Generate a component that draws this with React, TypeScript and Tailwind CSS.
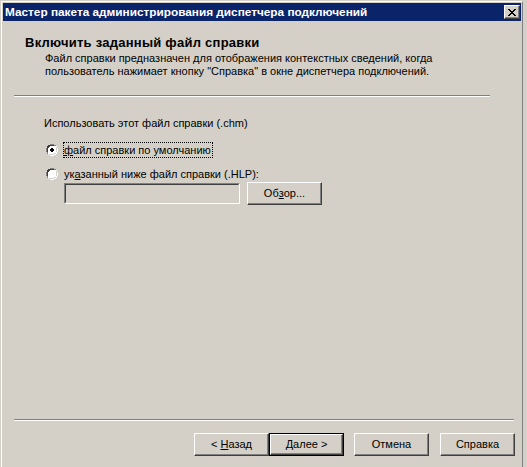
import React from "react";

const raised =
  "border border-t-white border-l-white border-r-[#404040] border-b-[#404040] shadow-[inset_-1px_-1px_0_#808080]";

function Btn({ children, def = false, w = "w-[75px]" }: { children: React.ReactNode; def?: boolean; w?: string }) {
  if (def) {
    return (
      <div className={`${w} h-[23px] border border-black`}>
        <div className={`w-full h-full ${raised} flex items-center justify-center text-[11px] text-black`}>{children}</div>
      </div>
    );
  }
  return (
    <div className={`${w} h-[23px] ${raised} flex items-center justify-center text-[11px] text-black`}>{children}</div>
  );
}

function Radio({ checked }: { checked?: boolean }) {
  return (
    <svg width="12" height="12" viewBox="0 0 12 12" className="shrink-0">
      <path d="M4 0h4v1h2v1h1v2h1v4h-1v2h-1v1h-2v1h-4v-1h-2v-1h-1v-2h-1v-4h1v-2h1v-1h2z" fill="#ffffff" />
      <path d="M4 0h4v1h2v1h-2v-1h-4v1h-2v2h-1v4h1v2h-1v-2h-1v-4h1v-2h1v-1h2z" fill="#808080" />
      <path d="M4 1h4v1h-4v1h-1v1h-1v4h-1v-4h1v-2h2z" fill="#404040" />
      <path d="M2 1h2v1h-2zM1 2h1v2h-1z" fill="#404040" />
      <path d="M11 4h1v4h-1v2h-1v1h-2v1h-4v-1h4v-1h2v-2h1z" fill="#ffffff" />
      <path d="M10 3h1v5h-1v2h-2v1h-5v-1h5v-1h2z" fill="#d4d0c8" />
      {checked && <path d="M5 4h2v1h1v2h-1v1h-2v-1h-1v-2h1z" fill="#000" />}
    </svg>
  );
}

export default function App() {
  return (
    <div
      className="w-[527px] h-[467px] bg-[#d4d0c8] overflow-hidden text-black"
      style={{ fontFamily: "Tahoma, 'Liberation Sans', Arial, sans-serif" }}
    >
      <div className="ml-px mt-px w-[522px] h-[466px] border-l border-t border-white border-r border-r-[#808080] p-px">
        {/* title bar */}
        <div className="h-[18px] bg-[#0a246a] flex items-center justify-between pl-[2px] pr-px">
          <span className="text-white font-bold text-[11.8px] leading-[18px] whitespace-nowrap">
            Мастер пакета администрирования диспетчера подключений
          </span>
          <div className={`w-[16px] h-[14px] bg-[#d4d0c8] ${raised} flex items-center justify-center`}>
            <svg width="8" height="7" viewBox="0 0 8 7">
              <path d="M0 0h2v1h1v1h2v-1h1v-1h2v1h-1v1h-1v1h-1v1h1v1h1v1h1v1h-2v-1h-1v-1h-2v1h-1v1h-2v-1h1v-1h1v-1h1v-1h-1v-1h-1v-1h-1z" fill="#000" />
            </svg>
          </div>
        </div>

        {/* header */}
        <div className="ml-[22px] mt-[14px] text-[13px] leading-[16px] font-bold tracking-[0.25px] whitespace-nowrap">
          Включить заданный файл справки
        </div>
        <div className="ml-[42px] mt-px text-[11px] leading-[13px] whitespace-nowrap">
          <div>Файл справки предназначен для отображения контекстных сведений, когда</div>
          <div>пользователь нажимает кнопку "Справка" в окне диспетчера подключений.</div>
        </div>
        <div className="ml-[11px] mt-[17px] w-[476px]">
          <div className="h-px bg-[#808080]" />
          <div className="h-px bg-white" />
        </div>

        {/* body */}
        <div className="ml-[41px] mt-[20px] text-[11px] leading-[13px] whitespace-nowrap">
          Использовать этот файл справки (.chm)
        </div>
        <div className="ml-[43px] mt-[12px] h-[16px] flex items-center text-[11px]">
          <Radio checked />
          <span className="ml-[5px] h-[16px] leading-[14px] border border-dotted border-black whitespace-nowrap pr-px">
            <span className="underline">ф</span>айл справки по умолчанию
          </span>
        </div>
        <div className="ml-[43px] mt-[8px] h-[16px] flex items-center text-[11px]">
          <Radio />
          <span className="ml-[6px] whitespace-nowrap">
            ук<span className="underline">а</span>занный ниже файл справки (.HLP):
          </span>
        </div>
        <div className="ml-[61px] flex items-center gap-[7px]">
          <div className="w-[176px] h-[21px] border border-t-[#808080] border-l-[#808080] border-r-white border-b-white">
            <div className="w-full h-full border border-t-[#404040] border-l-[#404040] border-r-[#d4d0c8] border-b-[#d4d0c8] bg-[#d4d0c8]" />
          </div>
          <Btn>
            Об<span className="underline">з</span>ор...
          </Btn>
        </div>

        {/* bottom */}
        <div className="ml-[11px] mt-[214px] w-[500px]">
          <div className="h-px bg-[#808080]" />
          <div className="h-px bg-white" />
        </div>
        <div className="ml-[191px] mt-[12px] flex">
          <Btn>
            &lt; <span className="underline ml-[3px]">Н</span>азад
          </Btn>
          <Btn def>
            <span className="underline">Д</span>алее &gt;
          </Btn>
          <div className="ml-[10px]">
            <Btn>Отмена</Btn>
          </div>
          <div className="ml-[11px]">
            <Btn>Справка</Btn>
          </div>
        </div>
      </div>
    </div>
  );
}
